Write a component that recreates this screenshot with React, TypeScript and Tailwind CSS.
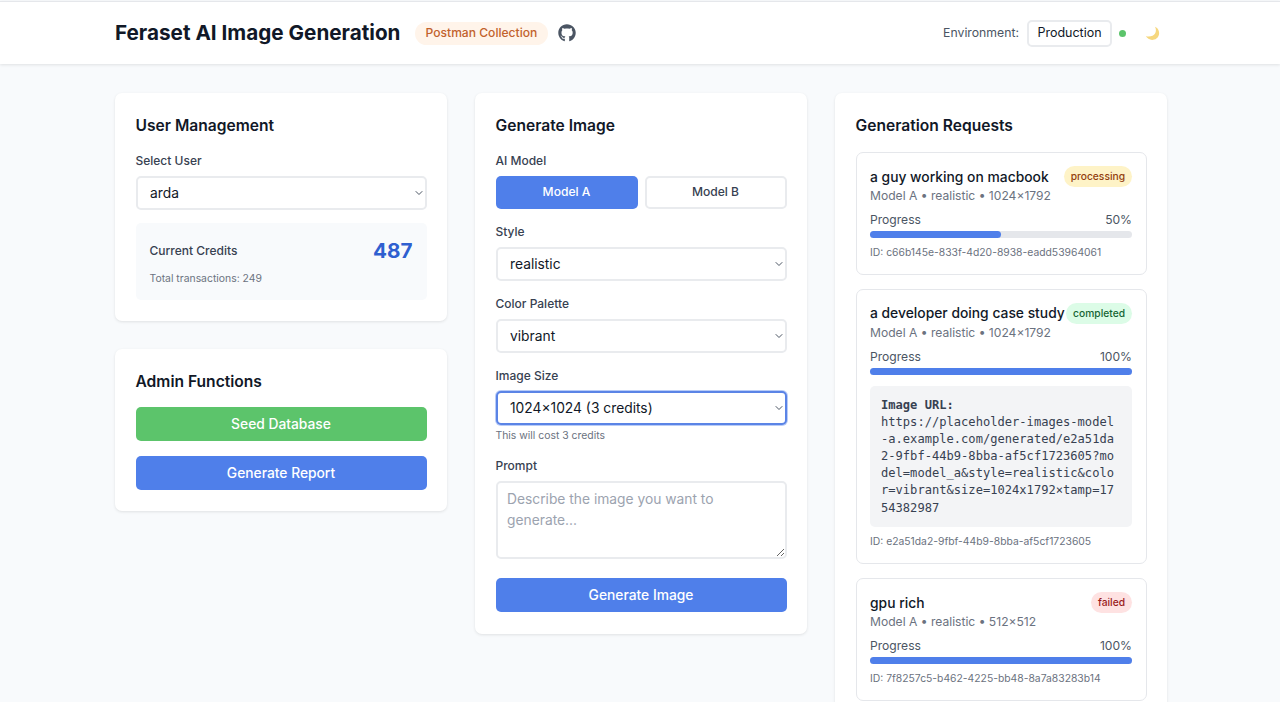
import React from "react";
import { FaGithub } from "react-icons/fa";
import { ChevronDown } from "lucide-react";

const requests = [
  {
    id: "c66b145e-833f-4d20-8938-eadd53964061",
    title: "a guy working on macbook",
    meta: "Model A • realistic • 1024×1792",
    progress: 50,
    status: "processing",
    badge: "bg-[#fef3c7] text-[#92400e]",
  },
  {
    id: "e2a51da2-9fbf-44b9-8bba-af5cf1723605",
    title: "a developer doing case study",
    meta: "Model A • realistic • 1024×1792",
    progress: 100,
    status: "completed",
    badge: "bg-[#dcfce7] text-[#166534]",
    url: "https://placeholder-images-model-a.example.com/generated/e2a51da2-9fbf-44b9-8bba-af5cf1723605?model=model_a&style=realistic&color=vibrant&size=1024x1792×tamp=1754382987",
  },
  {
    id: "7f8257c5-b462-4225-bb48-8a7a83283b14",
    title: "gpu rich",
    meta: "Model A • realistic • 512×512",
    progress: 100,
    status: "failed",
    badge: "bg-[#fee2e2] text-[#991b1b]",
  },
];

const Label = ({ children }: { children: React.ReactNode }) => (
  <label className="block text-[12px] leading-[17px] font-medium text-[#374151] mb-[7px]">
    {children}
  </label>
);

const Select = ({ value, focused }: { value: string; focused?: boolean }) => (
  <div className="relative">
    <select
      defaultValue={value}
      className={`block w-full h-[34px] px-[12.5px] appearance-none rounded-[5px] bg-white text-[13.8px] text-[#111827] outline-none border-2 ${
        focused
          ? "border-[#5b84e6] ring-1 ring-[#4f7fea]/40"
          : "border-[#e9ebee]"
      }`}
    >
      <option value={value}>{value}</option>
    </select>
    {/* native arrow differs per platform, so draw it */}
    <ChevronDown
      className="absolute right-[2px] top-[11px] text-[#4b5563] pointer-events-none"
      size={12}
      strokeWidth={2}
    />
  </div>
);

const Card = ({ children }: { children: React.ReactNode }) => (
  <div className="bg-white rounded-[7px] px-[20.5px] pt-[22px] pb-[21px] shadow-[0_1px_3px_rgba(0,0,0,0.1)]">
    {children}
  </div>
);

const Heading = ({ children }: { children: React.ReactNode }) => (
  <h2 className="text-[15.6px] leading-[22px] font-semibold text-[#111827] mb-[15px]">{children}</h2>
);

const RequestCard = ({ req }: { req: (typeof requests)[number] }) => (
  <div className="border border-[#e5e7eb] rounded-[7px] px-[13.5px] pt-[13.2px] pb-[14.6px]">
    <div className="flex items-center justify-between">
      <span className="text-[13.85px] leading-[20px] font-medium text-[#111827] whitespace-nowrap">{req.title}</span>
      <span className={`px-[7px] h-[21px] flex items-center rounded-full text-[10.25px] font-medium ${req.badge}`}>
        {req.status}
      </span>
    </div>
    <p className="text-[12.1px] leading-[17px] text-[#6b7280]">{req.meta}</p>
    <div className="flex justify-between text-[12.1px] leading-[17px] text-[#4b5563] mt-[7px]">
      <span>Progress</span>
      <span>{req.progress}%</span>
    </div>
    <div className="h-[7px] rounded-full bg-[#e5e7eb] mt-[3px]">
      <div className="h-full rounded-full bg-[#4f7fea]" style={{ width: `${req.progress}%` }} />
    </div>
    {req.url && (
      <div className="bg-[#f3f4f6] rounded-[5px] px-[11px] pt-[11px] pb-[10.6px] mt-[10.6px] text-[12.1px] leading-[17.15px] text-[#374151] font-['DejaVu_Sans_Mono',monospace] break-all">
        <strong>Image URL:</strong>
        <br />
        {req.url}
      </div>
    )}
    <p className="text-[10.35px] leading-[14px] text-[#6b7280] mt-[7px]">ID: {req.id}</p>
  </div>
);

export default function App() {
  return (
    <div className="h-[702px] overflow-hidden bg-[#f8fafc] font-['Inter',sans-serif] text-[#111827]">
      {/* Header */}
      <header className="h-[63px] mt-[1px] bg-white border-t border-[#e5e7eb] shadow-[0_1px_3px_rgba(0,0,0,0.1)] px-[115px] flex items-center justify-between">
        <div className="flex items-center">
          <h1 className="text-[20.7px] leading-[28px] font-bold text-[#111827]">Feraset AI Image Generation</h1>
          <span className="ml-[14px] h-[23px] px-[11px] flex items-center rounded-full bg-[#fff4ea] text-[#c2622d] text-[12.1px] font-medium">
            Postman Collection
          </span>
          <FaGithub className="ml-[10px] text-[#4b5563]" size={18} />
        </div>
        <div className="flex items-center">
          <span className="text-[12.25px] font-normal text-[#4b5563]">Environment:</span>
          <span className="ml-[8px] h-[27px] w-[85px] flex items-center justify-center rounded-[5px] border-2 border-[#e9ebee] text-[12.5px] font-normal text-[#111827]">
            Production
          </span>
          <span className="ml-[7px] w-[7px] h-[7px] rounded-full bg-[#5cc46b]" />
          <svg className="ml-[19px] mr-[5px]" width="15" height="15" viewBox="0 0 15 15">
            <path d="M10 0.8 C12.6 5.6 9.6 11 3 10.6 C1.8 10.5 1.2 10.3 0.8 10.1 C2.4 13.2 6 14.6 9.2 13.6 C13 12.4 15 8.6 13.8 4.9 C13.1 2.9 11.8 1.5 10 0.8 Z" fill="#f6d77e" />
          </svg>
        </div>
      </header>

      {/* Main columns */}
      <main className="w-[1052px] ml-[115px] mt-[29px] grid grid-cols-3 gap-[28px] items-start">
        <div className="flex flex-col gap-[28px]">
          <Card>
            <Heading>User Management</Heading>
            <Label>Select User</Label>
            <Select value="arda" />
            <div className="mt-[13px] bg-[#f8fafc] rounded-[5px] p-[14px]">
              <div className="flex items-center justify-between">
                <span className="text-[12px] font-medium text-[#374151]">Current Credits</span>
                <span className="text-[20.7px] leading-[28px] font-bold text-[#2f5fd0]">487</span>
              </div>
              <p className="text-[10.4px] leading-[14px] text-[#6b7280] mt-[7px]">Total transactions: 249</p>
            </div>
          </Card>
          <Card>
            <Heading>Admin Functions</Heading>
            <button className="block w-full h-[34px] -mt-[1px] rounded-[5px] bg-[#5cc46b] text-white text-[13.8px] font-medium">
              Seed Database
            </button>
            <button className="block w-full h-[34px] mt-[15px] rounded-[5px] bg-[#4f7fea] text-white text-[13.8px] font-medium">
              Generate Report
            </button>
          </Card>
        </div>

        <Card>
          <Heading>Generate Image</Heading>
          <Label>AI Model</Label>
          <div className="grid grid-cols-2 gap-[7px] mb-[14px]">
            <button className="h-[33px] rounded-[5px] bg-[#4f7fea] text-white text-[12.1px] font-medium">Model A</button>
            <button className="h-[33px] rounded-[5px] border-2 border-[#e9ebee] bg-white text-[#374151] text-[12.1px] font-medium">Model B</button>
          </div>
          <Label>Style</Label>
          <Select value="realistic" />
          <div className="h-[14px]" />
          <Label>Color Palette</Label>
          <Select value="vibrant" />
          <div className="h-[14px]" />
          <Label>Image Size</Label>
          <Select value="1024×1024 (3 credits)" focused />
          <p className="text-[10.4px] leading-[14px] text-[#6b7280] mt-[4px]">This will cost 3 credits</p>
          <div className="h-[14px]" />
          <Label>Prompt</Label>
          <textarea
            rows={3}
            placeholder="Describe the image you want to generate..."
            className="block w-full h-[78px] px-[9.5px] py-[6px] rounded-[5px] border-2 border-[#e9ebee] bg-white text-[13.8px] leading-[21px] placeholder:text-[#9ca3af] outline-none"
          />
          <button className="block w-full h-[34px] mt-[19px] mb-[1px] rounded-[5px] bg-[#4f7fea] text-white text-[13.8px] font-medium">
            Generate Image
          </button>
        </Card>

        <Card>
          <Heading>Generation Requests</Heading>
          <div className="flex flex-col gap-[14px]">
            {requests.map((req) => (
              <RequestCard key={req.id} req={req} />
            ))}
          </div>
        </Card>
      </main>
    </div>
  );
}
